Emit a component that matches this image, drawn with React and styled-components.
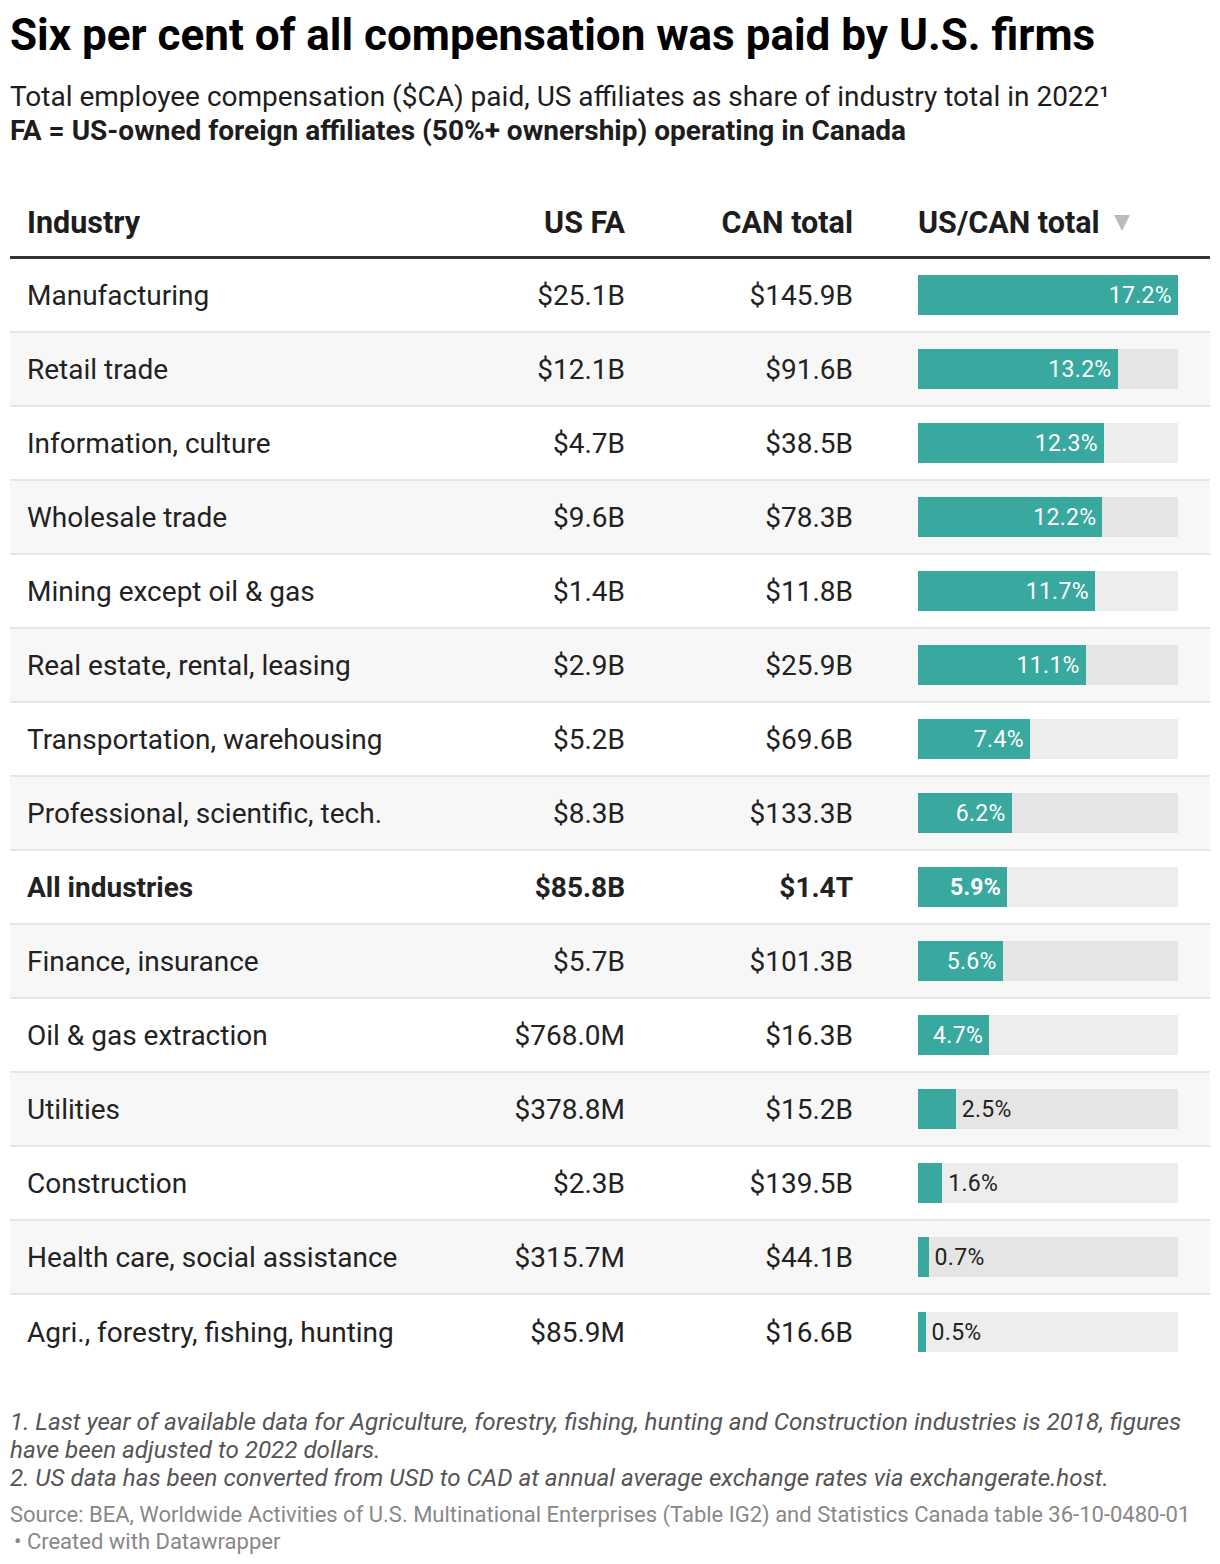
import React from 'react';
import styled, { createGlobalStyle } from 'styled-components';

const GlobalStyle = createGlobalStyle`
  body {
    margin: 0;
    background: #fff;
    font-family: Roboto, "Liberation Sans", sans-serif;
    color: #1d1d1d;
  }
`

const Page = styled.div`
  width: 1200px;
  padding: 11px 10px 0;
`
const Title = styled.h1`
  margin: 0;
  font-size: 44px;
  line-height: 48px;
  font-weight: 700;
  color: #000;
`
const Subtitle = styled.div`
  margin-top: 21px;
  font-size: 28px;
  line-height: 34px;
  color: #1d1d1d;
`
const Bold = styled.div`
  font-weight: 700;
`
const Table = styled.div`
  margin-top: 42px;
`
const Row = styled.div`
  display: grid;
  grid-template-columns: 460px 165px 228px 347px;
  align-items: center;
  height: ${p => (p.$head ? '64px' : '72px')};
  padding-bottom: ${p => (p.$head ? '2px' : '0')};
  background: ${p => (p.$alt ? '#f7f7f7' : '#fff')};
  border-bottom: ${p => (p.$head ? '3px solid #333' : '2px solid #e6e6e6')};
  font-size: ${p => (p.$head ? '30.5px' : '28px')};
  font-weight: ${p => (p.$head || p.$bold ? 700 : 400)};
  color: ${p => (p.$head ? '#1d1d1d' : '#222')};
  &:last-child {
    border-bottom: none;
    height: 74px;
  }
`
const NameCell = styled.div`
  padding-left: 17px;
  white-space: nowrap;
`
const NumCell = styled.div`
  text-align: right;
  padding-right: 10px;
  white-space: nowrap;
`
const BarCell = styled.div`
  padding-left: 55px;
  display: flex;
  align-items: center;
`
const HeadBar = styled(BarCell)`
  gap: 14px;
`
const Track = styled.div`
  width: 260px;
  height: 40px;
  background: rgba(0, 0, 0, 0.07);
  display: flex;
  align-items: center;
`
const Fill = styled.div`
  height: 100%;
  background: #39a89e;
  flex: none;
  display: flex;
  align-items: center;
  justify-content: flex-end;
`
const BarLabel = styled.span`
  font-size: 23px;
  padding: ${p => (p.$inside ? '0 6px 0 0' : '0 0 0 6px')};
  color: ${p => (p.$inside ? '#fff' : '#222')};
  letter-spacing: 0.3px;
`
const Notes = styled.div`
  margin-top: 39px;
  font-size: 24.2px;
  line-height: 28px;
  font-style: italic;
  color: #555;
`
const Source = styled.div`
  margin-top: 9px;
  font-size: 22px;
  line-height: 27px;
  color: #888;
`
const Credit = styled.span`
  display: inline-block;
  padding-left: 4px;
`

const rows = [
  ['Manufacturing', '$25.1B', '$145.9B', 17.2],
  ['Retail trade', '$12.1B', '$91.6B', 13.2],
  ['Information, culture', '$4.7B', '$38.5B', 12.3],
  ['Wholesale trade', '$9.6B', '$78.3B', 12.2],
  ['Mining except oil & gas', '$1.4B', '$11.8B', 11.7],
  ['Real estate, rental, leasing', '$2.9B', '$25.9B', 11.1],
  ['Transportation, warehousing', '$5.2B', '$69.6B', 7.4],
  ['Professional, scientific, tech.', '$8.3B', '$133.3B', 6.2],
  ['All industries', '$85.8B', '$1.4T', 5.9, true],
  ['Finance, insurance', '$5.7B', '$101.3B', 5.6],
  ['Oil & gas extraction', '$768.0M', '$16.3B', 4.7],
  ['Utilities', '$378.8M', '$15.2B', 2.5],
  ['Construction', '$2.3B', '$139.5B', 1.6],
  ['Health care, social assistance', '$315.7M', '$44.1B', 0.7],
  ['Agri., forestry, fishing, hunting', '$85.9M', '$16.6B', 0.5],
];

const MAX = 17.2;

const Bar = ({ value }) => {
  const width = (value / MAX) * 260;
  const inside = width > 55;
  const label = value.toFixed(1) + '%';
  return (
    <Track>
      <Fill style={{ width }}>
        {inside && <BarLabel $inside>{label}</BarLabel>}
      </Fill>
      {!inside && <BarLabel>{label}</BarLabel>}
    </Track>
  );
};

const SortArrow = () => (
  <svg width="16" height="17" viewBox="0 0 16 17">
    <polygon points="0,1 16,1 8,17" fill="#bbb" />
  </svg>
);

const App = () => (
  <Page>
    <GlobalStyle />
    <Title>Six per cent of all compensation was paid by U.S. firms</Title>
    <Subtitle>
      Total employee compensation ($CA) paid, US affiliates as share of industry total in 2022¹
      <Bold>FA = US-owned foreign affiliates (50%+ ownership) operating in Canada</Bold>
    </Subtitle>
    <Table>
      <Row $head>
        <NameCell>Industry</NameCell>
        <NumCell>US FA</NumCell>
        <NumCell>CAN total</NumCell>
        <HeadBar>
          US/CAN total
          <SortArrow />
        </HeadBar>
      </Row>
      {rows.map(([name, us, can, pct, bold], i) => (
        <Row key={name} $alt={i % 2 === 1} $bold={bold}>
          <NameCell>{name}</NameCell>
          <NumCell>{us}</NumCell>
          <NumCell>{can}</NumCell>
          <BarCell>
            <Bar value={pct} />
          </BarCell>
        </Row>
      ))}
    </Table>
    <Notes>
      1. Last year of available data for Agriculture, forestry, fishing, hunting and Construction industries is 2018, figures have been adjusted to 2022 dollars.
      <br />
      2. US data has been converted from USD to CAD at annual average exchange rates via exchangerate.host.
    </Notes>
    <Source>
      Source: BEA, Worldwide Activities of U.S. Multinational Enterprises (Table IG2) and Statistics Canada table 36-10-0480-01{' '}
      <Credit>• Created with Datawrapper</Credit>
    </Source>
  </Page>
);

export default App;
